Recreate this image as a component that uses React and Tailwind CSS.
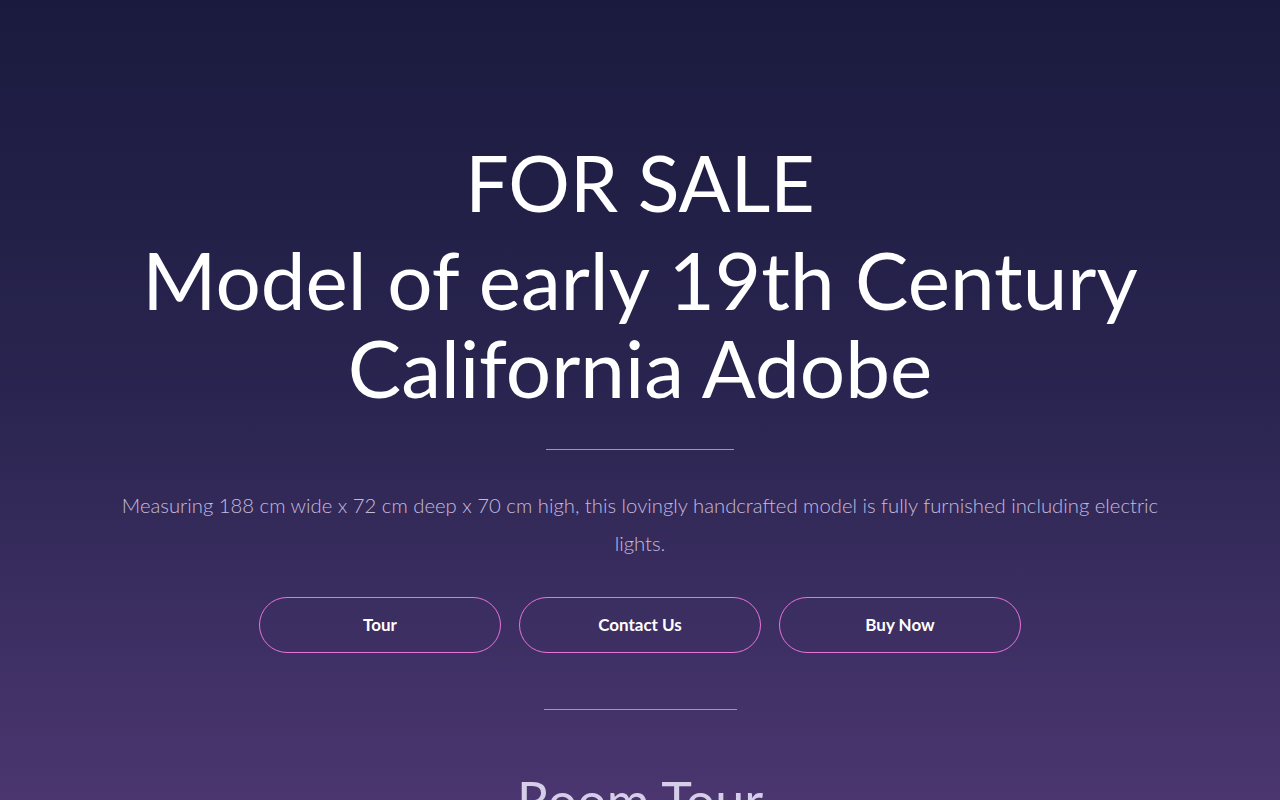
export default function App() {
  return (
    <div
      className="min-h-screen w-full bg-gradient-to-b from-[#1a1a3e] via-[#2a2550] to-[#4b3670] text-white overflow-hidden"
      style={{ fontFamily: "Lato, 'Noto Sans', sans-serif" }}
    >
      <div className="h-[800px] w-full flex flex-col items-center overflow-hidden">
        <h2 className="shrink-0 mt-[142px] text-[77px] leading-[80px] font-normal text-white">FOR SALE</h2>
        <h1 className="shrink-0 mt-[13px] text-[80px] leading-[88px] font-normal text-center text-white">
          Model of early 19th Century
          <br />
          California Adobe
        </h1>
        <div className="shrink-0 mt-[38px] w-[188px] border-t border-[#e66cdb]"></div>
        <p className="shrink-0 mt-[36px] w-[1060px] text-center text-[20.3px] leading-[38px] font-light text-[#c4bade]">
          Measuring 188 cm wide x 72 cm deep x 70 cm high, this lovingly handcrafted model is fully furnished including electric lights.
        </p>
        <div className="shrink-0 mt-[35px] flex gap-[18px]">
          {["Tour", "Contact Us", "Buy Now"].map((t) => (
            <button
              key={t}
              className="w-[242px] h-[56px] rounded-full border border-[#e873dc] text-[17px] font-bold text-white bg-transparent"
            >
              {t}
            </button>
          ))}
        </div>
        <div className="shrink-0 mt-[56px] w-[193px] border-t border-[#e66cdb]"></div>
        <h2 className="shrink-0 mt-[64px] text-[52px] leading-[52px] font-normal text-[#d6cde8]">Room Tour</h2>
      </div>
    </div>
  );
}
